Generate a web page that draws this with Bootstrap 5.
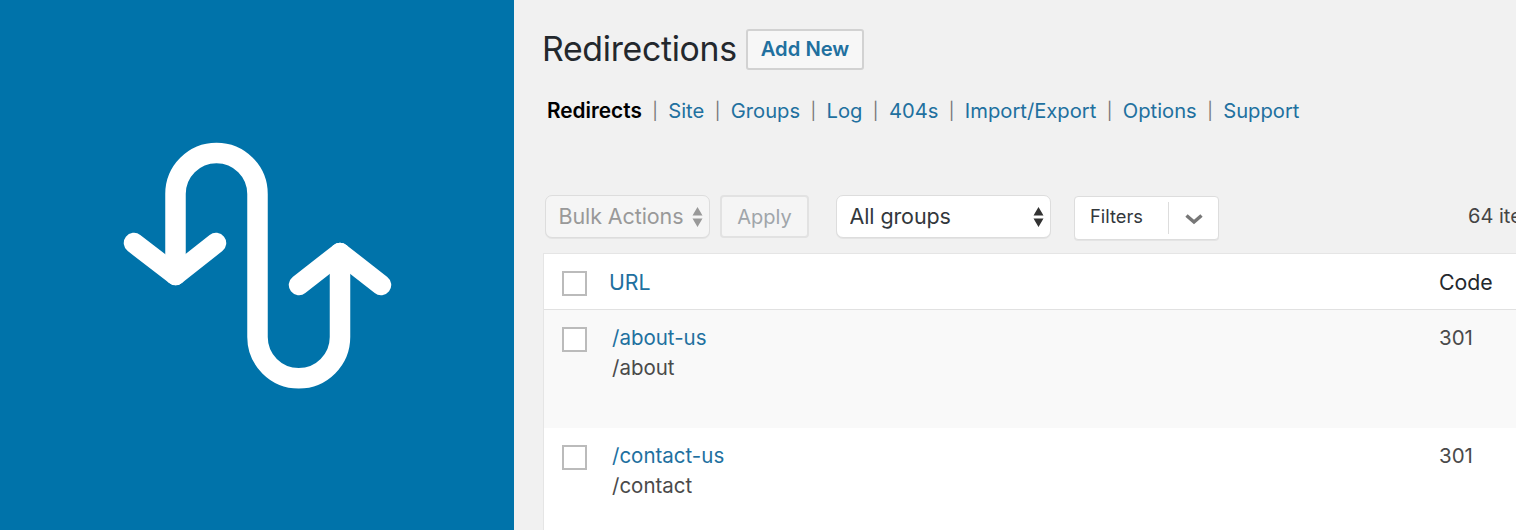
<!DOCTYPE html>
<html lang="en">
<head>
<meta charset="utf-8">
<title>Redirections</title>
<link href="https://cdn.jsdelivr.net/npm/bootstrap@5.3.0/dist/css/bootstrap.min.css" rel="stylesheet">
<style>
html,body{height:530px;overflow:hidden}
body{background:#f1f1f1;font-family:Inter,"Noto Sans",sans-serif;font-size:21px;color:#444}
a{text-decoration:none;color:#21709f}
.shell{height:530px;overflow:hidden}
.logo-pane{width:514px;flex:none;background:#0073aa}
.logo-pane svg{display:block}
.main-pane{min-width:0;flex:1 1 auto;overflow:hidden;padding-left:30px}
.title-row{height:52px;margin-top:23px;gap:9px}
.page-title{font-size:33.800px;font-weight:400;color:#23282d;margin:0 0 0 -2px;letter-spacing:-.3px;line-height:44px}
.add-new{font-size:20.200px;font-weight:600;color:#21709f;background:#f7f7f7;border:2px solid #d2d2d2;border-radius:3px;height:41px;padding:0 13px;line-height:1;--bs-btn-hover-color:#21709f}
.sub-nav{margin:21px 0 0 3px;height:30px;font-size:20.200px;line-height:30px;color:#777}
.sub-nav strong{color:#000;font-weight:600;font-size:20.800px}
.sub-nav .sep{margin:0 10.400px;font-size:17px;position:relative;top:-1px}
.tools{margin:69px 0 0 1px;height:44px;width:1100px}
.tool-select{font-size:21.500px;height:43px;padding:0 24px 0 12.500px;border:1px solid #ddd;border-radius:7px;box-shadow:0 1px 0 #e4e4e4;background-color:#fff;color:#32373c;background-size:11px 22px;background-position:right 6px center;letter-spacing:-.1px}
.tool-select:disabled{background-color:#f5f5f5;color:#999}
.sel-bulk{width:165px;background-image:url("data:image/svg+xml,%3Csvg xmlns='http://www.w3.org/2000/svg' viewBox='0 0 11 22'%3E%3Cpath fill='%23999' d='M5.5 1 10.5 9.5H.5zM5.5 21 .5 12.500h10z'/%3E%3C/svg%3E")}
.sel-groups{width:215px;margin-left:27px;background-image:url("data:image/svg+xml,%3Csvg xmlns='http://www.w3.org/2000/svg' viewBox='0 0 11 22'%3E%3Cpath fill='%23333' d='M5.5 1 10.500 9.500H.5zM5.500 21 .5 12.500h10z'/%3E%3C/svg%3E")}
.apply-btn{width:89px;height:43px;margin-left:10px;font-size:20px;padding:0;border:2px solid #e2e2e2;border-radius:4px;background:#f5f5f5;color:#a0a5aa;opacity:1}
.apply-btn:disabled{border-color:#e2e2e2;background:#f5f5f5;color:#a0a5aa;opacity:1}
.filter-box{width:145px;height:44px;margin:1px 0 0 23px;border:1px solid #ddd;border-radius:4px;background:#fff;box-shadow:0 1px 0 #e4e4e4;font-size:18.300px;color:#32373c}
.filter-label{width:94px;padding-left:15px;height:32px;line-height:29px;border-right:1px solid #ddd}
.filter-caret{flex:1;text-align:center}
.count-text{margin-left:249px;line-height:43px;white-space:nowrap;font-size:20px;color:#444}
.grid-wrap{margin:14px 0 0 -1px;width:1100px;background:#fff;border:1px solid #e5e5e5;border-right:0}
.redir-table{width:100%;table-layout:fixed;margin:0;--bs-table-bg:transparent;--bs-table-color:#444}
.redir-table th,.redir-table td{border:0;padding:0;vertical-align:top;font-weight:400;font-size:20.500px}
.redir-table thead th{height:55px;border-bottom:1px solid #e1e1e1;color:#23282d;vertical-align:middle;font-size:21.300px;padding-top:3px}
.redir-table thead th a{color:#21709f;margin-left:-3px}
.redir-table .r1 td{background:#f9f9f9;height:119px}
.redir-table .r2 td{background:#fff;height:118px}
.redir-table td.url-cell{padding:13px 0 0 0;line-height:30px;color:#4a4a4a}
.redir-table td.code-cell{padding-top:13px;line-height:30px;color:#4a4a4a}
.fake-check{width:25px;height:25px;border:2px solid #bbb;background:#fff;margin:0 0 0 18px;display:block}
.redir-table thead .fake-check{margin-top:1px}
.check-row{padding-top:17px}
.col-check{width:68px}.col-url{width:827px}
</style>
</head>
<body>
<div class="shell d-flex">
  <aside class="logo-pane">
    <svg width="514" height="530" viewBox="0 0 514 530" role="img" aria-label="Redirection logo"><g fill="none" stroke="#fff" stroke-width="20.500" stroke-linecap="round" stroke-linejoin="round"><path d="M175.500 275V194A41 41 0 0 1 257.500 194V337A41.250 41.250 0 0 0 340 337V253"/><path d="M134 243 175.500 275 216 243"/><path d="M299 285 340 253 381 285"/></g></svg>
  </aside>
  <main class="main-pane">
    <div class="title-row d-flex align-items-center">
      <h1 class="page-title">Redirections</h1>
      <a class="btn add-new d-inline-flex align-items-center" href="#">Add New</a>
    </div>
    <nav class="sub-nav text-nowrap"><strong>Redirects</strong><span class="sep">|</span><a href="#">Site</a><span class="sep">|</span><a href="#">Groups</a><span class="sep">|</span><a href="#">Log</a><span class="sep">|</span><a href="#">404s</a><span class="sep">|</span><a href="#">Import/Export</a><span class="sep">|</span><a href="#">Options</a><span class="sep">|</span><a href="#">Support</a></nav>
    <div class="tools d-flex align-items-start">
      <select class="form-select tool-select sel-bulk" disabled><option>Bulk Actions</option></select>
      <button class="btn apply-btn" disabled>Apply</button>
      <select class="form-select tool-select sel-groups"><option>All groups</option></select>
      <div class="filter-box d-flex align-items-center">
        <span class="filter-label">Filters</span>
        <span class="filter-caret"><svg width="20" height="12" viewBox="0 0 20 12" aria-hidden="true"><path d="M2.500 2.500 10 9 17.500 2.500" fill="none" stroke="#777" stroke-width="3.500"/></svg></span>
      </div>
      <div class="count-text">64 items</div>
    </div>
    <div class="grid-wrap">
      <table class="table redir-table">
        <colgroup><col class="col-check"><col class="col-url"><col></colgroup>
        <thead><tr><th><span class="fake-check"></span></th><th><a href="#">URL</a></th><th>Code</th></tr></thead>
        <tbody>
          <tr class="r1"><td><div class="check-row"><span class="fake-check"></span></div></td><td class="url-cell"><a href="#">/about-us</a><br>/about</td><td class="code-cell">301</td></tr>
          <tr class="r2"><td><div class="check-row"><span class="fake-check"></span></div></td><td class="url-cell"><a href="#">/contact-us</a><br>/contact</td><td class="code-cell">301</td></tr>
        </tbody>
      </table>
    </div>
  </main>
</div>
<script src="https://cdn.jsdelivr.net/npm/bootstrap@5.3.0/dist/js/bootstrap.bundle.min.js"></script>
</body>
</html>
